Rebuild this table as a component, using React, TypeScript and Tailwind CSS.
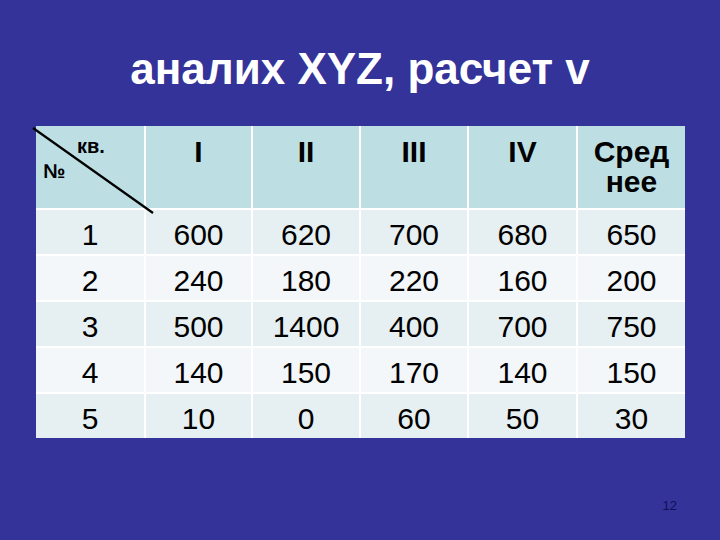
const heads = ["I", "II", "III", "IV"];

const rows = [
  ["1", "600", "620", "700", "680", "650"],
  ["2", "240", "180", "220", "160", "200"],
  ["3", "500", "1400", "400", "700", "750"],
  ["4", "140", "150", "170", "140", "150"],
  ["5", "10", "0", "60", "50", "30"],
];

export default function App() {
  return (
    <div
      className="flex h-[540px] w-[720px] flex-col bg-[#333399]"
      style={{ fontFamily: '"Liberation Sans", Arial, sans-serif' }}
    >
      <h1 className="pt-[41px] text-center text-[44px] font-bold leading-[55px] text-white">
        аналих XYZ, расчет v
      </h1>

      <div className="relative ml-[36px] mt-[30px] w-[649px]">
        <div className="grid grid-cols-[108px_105px_106px_106px_107px_107px] gap-[2px] bg-white">
          <div className="h-[82px] bg-[#bddfe3] pt-[10px] text-[20px] font-bold leading-[20px] text-black">
            <div className="pl-[41px]">кв.</div>
            <div className="mt-[5px] pl-[7px]">№</div>
          </div>
          {heads.map((h) => (
            <div
              key={h}
              className="h-[82px] bg-[#bddfe3] pt-[11px] text-center text-[30px] font-bold leading-[30px] text-black"
            >
              {h}
            </div>
          ))}
          <div className="h-[82px] bg-[#bddfe3] pt-[11px] text-center text-[30px] font-bold leading-[30px] text-black">
            Сред
            <br />
            нее
          </div>

          {rows.map((r, i) =>
            r.map((v, j) => (
              <div
                key={`${i}-${j}`}
                className={`h-[44px] pt-[10px] text-center text-[30px] leading-[30px] text-black ${
                  i % 2 === 0 ? "bg-[#e6eff1]" : "bg-[#f3f7f9]"
                }`}
              >
                {v}
              </div>
            ))
          )}
        </div>

        <svg
          className="pointer-events-none absolute left-0 top-0 overflow-visible"
          width="120"
          height="90"
        >
          <line x1="-3" y1="2" x2="117" y2="87" stroke="#000" strokeWidth="2.2" />
        </svg>
      </div>

      <div className="mt-[60px] flex justify-end pr-[43px] text-[13px] leading-[16px] text-[#10105a]">
        12
      </div>
    </div>
  );
}
